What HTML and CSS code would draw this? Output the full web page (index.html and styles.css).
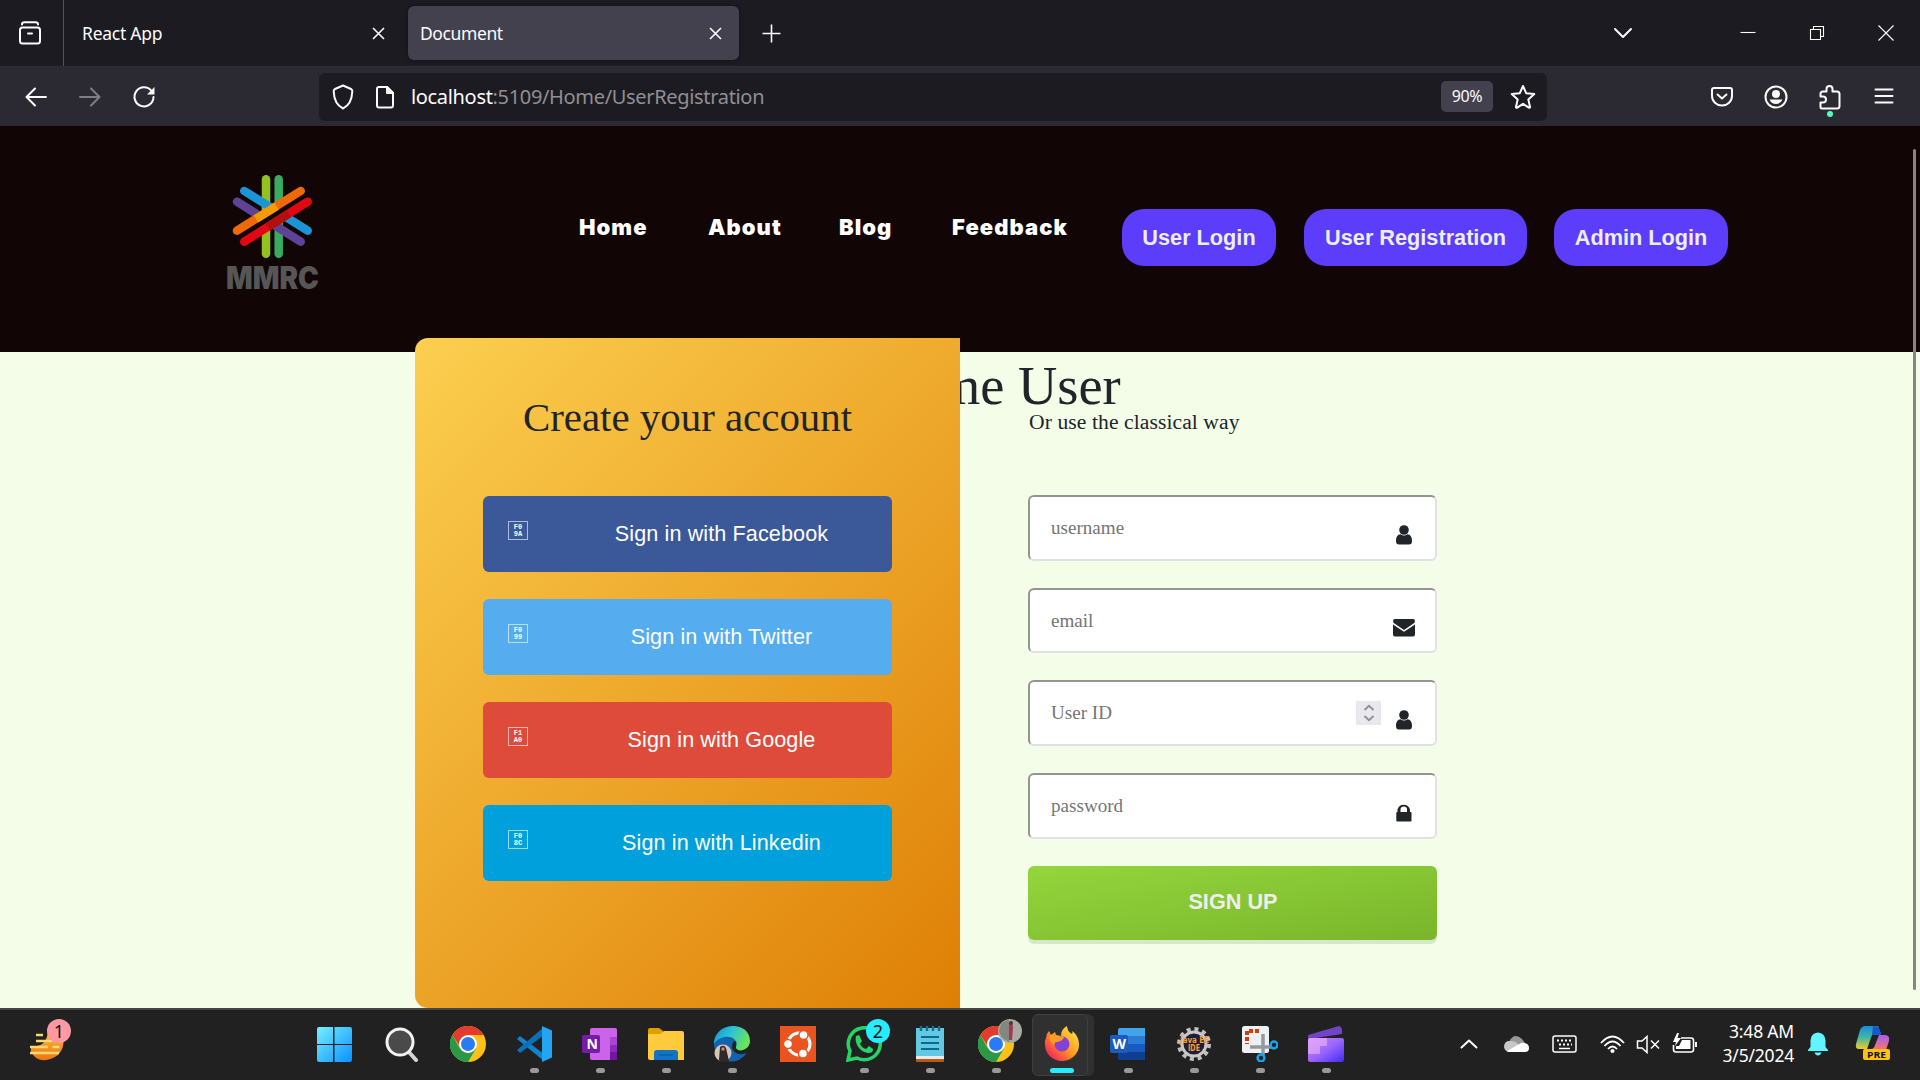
FILE: index.html
```html
<!DOCTYPE html>
<html lang="en">
<head>
<meta charset="utf-8">
<title>Document</title>
<link rel="stylesheet" href="styles.css">
</head>
<body>
<div class="screen">
  <div class="tabbar">
    <div class="pinned"><svg width="24" height="24" viewBox="0 0 24 24" class="ln"><path d="M4 3.500C4 2 5 1.200 6.500 1.200h11C19 1.200 20 2 20 3.500M4.500 6.500h15a2.500 2.500 0 0 1 2.500 2.500v11a2.500 2.500 0 0 1-2.500 2.500h-15A2.500 2.500 0 0 1 2 20V9a2.500 2.500 0 0 1 2.500-2.500zM10 12.500h4"/></svg></div>
    <div class="tab"><span>React App</span><svg width="13" height="13" viewBox="0 0 13 13" class="thin"><path d="M1 1l11 11M12 1L1 12"/></svg></div>
    <div class="tab active"><span>Document</span><svg width="13" height="13" viewBox="0 0 13 13" class="thin"><path d="M1 1l11 11M12 1L1 12"/></svg></div>
    <svg class="plus thin" width="19" height="19" viewBox="0 0 19 19"><path d="M9.500 0.500v18M0.500 9.500h18"/></svg>
    <div class="winctl">
      <svg width="20" height="14" viewBox="0 0 20 14" class="ln"><path d="M2 3l8 8 8-8"/></svg>
      <svg width="16" height="16" viewBox="0 0 16 16" class="hair"><path d="M0.500 7.500h15"/></svg>
      <svg width="16" height="16" viewBox="0 0 16 16" class="hair"><path d="M1.500 4.500h10v10h-10zM4.500 4V1.500h10v10H12"/></svg>
      <svg width="16" height="16" viewBox="0 0 16 16" class="hair"><path d="M0.500 0.500l15 15M15.500 0.500l-15 15"/></svg>
    </div>
  </div>
  <div class="toolbar">
    <div class="navbtns">
      <svg width="22" height="20" viewBox="0 0 22 20" class="ln"><path d="M10 1.500L1.500 10l8.500 8.500M2 10h19"/></svg>
      <svg width="22" height="20" viewBox="0 0 22 20" class="ln dim"><path d="M12 1.500l8.500 8.500-8.500 8.500M20 10H1"/></svg>
      <svg width="24" height="24" viewBox="0 0 24 24" class="ln"><path d="M19.500 6A9.500 9.500 0 1 0 21.500 12"/><path d="M22.500 2v7.500h-7.500z" fill="#fbfbfe" stroke="none"/></svg>
    </div>
    <div class="urlbar">
      <svg width="22" height="26" viewBox="0 0 22 26" class="ln"><path d="M11 1.500L19 5q1.500.7 1.300 2.500C20 15 17 21.500 11 24.500 5 21.500 2 15 1.700 7.500 1.500 5.700 3 5 3 5z"/></svg>
      <svg width="20" height="24" viewBox="0 0 20 24" class="ln"><path d="M4 2h8l6 6v12.500a2 2 0 0 1-2 2H4a2 2 0 0 1-2-2V4a2 2 0 0 1 2-2z"/><path d="M12 2v6h6z" fill="#fbfbfe"/></svg>
      <span class="url"><b>localhost</b>:5109/Home/UserRegistration</span>
      <span class="zoom">90%</span>
      <svg width="26" height="26" viewBox="0 0 26 26" class="ln"><path d="M13 2l3.300 7.300 8 .8-6 5.300 1.800 7.800q-.4.900-1.300.5L13 19.800l-5.800 3.900q-1.200.3-1.300-.5l1.800-7.800-6-5.300 8-.8z"/></svg>
    </div>
    <div class="tools">
      <svg width="24" height="24" viewBox="0 0 24 24" class="ln"><path d="M4 3h16a2 2 0 0 1 2 2v6a10 9.500 0 0 1-20 0V5a2 2 0 0 1 2-2zM7.500 9.500L12 13.500l4.500-4"/></svg>
      <svg width="24" height="24" viewBox="0 0 24 24" class="ln"><circle cx="12" cy="12" r="10.500"/><g fill="#fbfbfe" stroke="none"><circle cx="12" cy="9" r="4"/><path d="M5.500 14.500h13q-2 4.500-6.500 4.500t-6.500-4.500z"/></g></svg>
      <div class="ext"><svg width="24" height="26" viewBox="0 0 24 26" class="ln"><path d="M4 24.500h15a2.500 2.500 0 0 0 2.500-2.500V10A2.500 2.500 0 0 0 19 7.500h-4.500V5a3 3 0 0 0-6 0v2.500H5A2.500 2.500 0 0 0 2.500 10v2.500H5a3 3 0 0 1 0 6H2.500V23q0 1.500 1.500 1.500z"/></svg><i class="dot"></i></div>
      <svg width="20" height="18" viewBox="0 0 20 18" class="ln"><path d="M1.500 2.500h17M1.500 9h17M1.500 15.500h17"/></svg>
    </div>
  </div>

  <div class="page">
    <header class="site">
      <svg class="logo" width="98" height="120" viewBox="-2 0 98 120">
        <g stroke-width="8.500" stroke-linecap="round" fill="none">
          <path stroke="#95c11f" d="M40 4.200v74.500"/><path stroke="#3aaa61" d="M52.700 4.200v74.500"/>
          <path stroke="#5d4296" d="M11 26.700l63.700 40"/><path stroke="#1b95d8" d="M18.300 16l63.400 39.700"/>
          <path stroke="#120505" stroke-width="6" stroke-linecap="butt" d="M14.700 61.200l63.500-39.800"/>
          <path stroke="#ee6a08" d="M11 55.700l63.700-39.700"/><path stroke="#e30613" d="M18.300 66.700l63.400-40"/>
          <path stroke="#f59a00" stroke-linecap="butt" d="M30 43.900l20.500-12.800"/><path stroke="#b1100c" stroke-linecap="butt" d="M42 51.800l20.500-13"/>
        </g>
        <text x="0" y="113.500" textLength="93" lengthAdjust="spacingAndGlyphs">MMRC</text>
      </svg>
      <nav><a class="n1">Home</a><a class="n2">About</a><a class="n3">Blog</a><a class="n4">Feedback</a></nav>
      <div class="login"><button class="b1">User Login</button><button class="b2">User Registration</button><button class="b3">Admin Login</button></div>
    </header>
    <main>
      <h1>Welcome User</h1>
      <div class="card">
        <section class="social">
          <h2>Create your account</h2>
          <a class="fb"><i>F0<br>9A</i><span>Sign in with Facebook</span></a>
          <a class="tw"><i>F0<br>99</i><span>Sign in with Twitter</span></a>
          <a class="gg"><i>F1<br>A0</i><span>Sign in with Google</span></a>
          <a class="li"><i>F0<br>8C</i><span>Sign in with Linkedin</span></a>
        </section>
        <section class="classic">
          <p>Or use the classical way</p>
          <div class="field"><span>username</span><svg width="24" height="20" viewBox="0 0 24 20"><circle cx="12" cy="5" r="4.800"/><path d="M4 16c0-4 1.500-6.500 4.500-6.700q3.500 2.500 7 0C18.500 9.500 20 12 20 16q0 3.500-3 3.500H7q-3 0-3-3.500z"/></svg></div>
          <div class="field"><span>email</span><svg width="24" height="20" viewBox="0 0 24 20"><path d="M1 3q0-2 2-2h18q2 0 2 2 0 1.500-1.500 2.500L12 12 2.500 5.500Q1 4.500 1 3zM1 6.500l11 7.200 11-7.200V16.500q0 2-2 2H3q-2 0-2-2z"/></svg></div>
          <div class="field"><span>User ID</span><b class="spin"><svg width="12" height="18" viewBox="0 0 12 18"><path d="M1.500 6L6 1.800 10.500 6M1.500 12L6 16.200 10.500 12"/></svg></b><svg width="24" height="20" viewBox="0 0 24 20"><circle cx="12" cy="5" r="4.800"/><path d="M4 16c0-4 1.500-6.500 4.500-6.700q3.500 2.500 7 0C18.500 9.500 20 12 20 16q0 3.500-3 3.500H7q-3 0-3-3.500z"/></svg></div>
          <div class="field"><span>password</span><svg width="24" height="20" viewBox="0 0 24 20"><path d="M5.500 9V6.500a6.500 6.500 0 0 1 12.500 0V9h.5q1 0 1 1v7.500q0 1-1 1H5.300q-1 0-1-1V10q0-1 1-1zM8.500 9H15V6.500q0-3-3.200-3t-3.300 3z"/></svg></div>
          <button class="signup">SIGN UP</button>
        </section>
      </div>
    </main>
    <i class="scroll"></i>
  </div>

  <footer class="taskbar">
    <div class="widget"><svg width="48" height="48" viewBox="0 0 48 48"><defs><linearGradient id="sun" x2="0" y2="1"><stop stop-color="#f8c040"/><stop offset="1" stop-color="#f0740f"/></linearGradient></defs><path d="M3 28Q18 30 20 14 30 8 35 20q2 10-5 17-8 6-16 5Q8 42 3 34z" fill="url(#sun)"/><g stroke="#f8d774" stroke-width="2.700"><path d="M8 17h7M8 23h16M2 29h18M24.500 29h7M2 35h29"/></g></svg><em>1</em></div>
    <div class="apps">
      <div class="start"><svg viewBox="0 0 36 36"><defs><linearGradient id="win" x2="1" y2="1"><stop stop-color="#74f0ff"/><stop offset="1" stop-color="#0a90ff"/></linearGradient></defs><path fill="url(#win)" d="M1 3q0-2 2-2h14v17H1zM18.500 1H34q2 0 2 2v15H18.500zM1 19h16v17H3q-2 0-2-2zM18.500 19H36v15q0 2-2 2H18.500z"/></svg></div>
      <div><svg viewBox="0 0 36 36"><path d="M24 25l8 9" stroke="#d2d4d8" stroke-width="4" stroke-linecap="round"/><circle cx="16" cy="16" r="13" fill="#4a4a4a" stroke="#f2f2f3" stroke-width="3"/></svg></div>
      <div><svg viewBox="0 0 36 36"><circle cx="18" cy="18" r="18" fill="#fbc116"/><path d="M2.400 9A18 18 0 0 1 33.600 9H18L11 22z" fill="#e33b2e"/><path d="M2.400 9A18 18 0 0 0 18 36l8-13.500H10z" fill="#2a9a48"/><circle cx="18" cy="18" r="9" fill="#fff"/><circle cx="18" cy="18" r="7" fill="#2a7af3"/></svg></div>
      <div class="on"><svg viewBox="0 0 36 36"><path d="M1 13l3-3L28 28v7z" fill="#1183cc"/><path d="M1 24l3 3L28 9V1z" fill="#0a71b8"/><path d="M26 0l10 4.500v27L26 36z" fill="#25a4f0"/></svg></div>
      <div class="on"><svg viewBox="0 0 36 36"><rect x="8" y="2" width="27" height="32" rx="2" fill="#cb64e8"/><path d="M28 11h7v8h-7z" fill="#a945d0"/><path d="M28 19h7v7h-7z" fill="#8e2abb"/><path d="M28 26h7v8h-7z" fill="#7417a0"/><rect y="9" width="18" height="18" rx="2" fill="#7719aa"/><text x="4.500" y="23" class="ms">N</text></svg></div>
      <div class="on"><svg viewBox="0 0 36 36"><path d="M0 4q0-2 2-2h9l4 3v6H0z" fill="#dfa000"/><path d="M0 8h12l4-3h18q2 0 2 2v27H2q-2 0-2-2z" fill="#ffcb3d"/><path d="M6 34v-7q0-3 3-3h18q3 0 3 3v7z" fill="#1374c6"/><path d="M11 29h14" stroke="#07549c"/></svg></div>
      <div class="on"><svg viewBox="0 0 36 36"><defs><linearGradient id="edg" x2="1" y2=".4"><stop stop-color="#138fd8"/><stop offset=".5" stop-color="#2cc3d5"/><stop offset="1" stop-color="#6be35b"/></linearGradient></defs><circle cx="17.500" cy="18" r="17.500" fill="#1262b0"/><path d="M20 15q-5 7 2 12 6 3 12-1l3-8z" fill="#1f2422"/><path d="M0 18C0-5 36-6 36 15c0 9-12 12-14 7 0-4 2-5-2-9S5 10 0 18z" fill="url(#edg)"/><circle cx="9" cy="27" r="8.500" fill="#d5c5b5"/><path d="M6 21q4-3 6 1l3 13q-6 3-10-1z" fill="#302829"/><circle cx="9" cy="23" r="1.700" fill="#c48a70"/></svg></div>
      <div><svg viewBox="0 0 36 36"><path fill="#e95420" d="M0 0h36v36H0z"/><circle cx="19" cy="18" r="11" fill="none" stroke="#fff" stroke-width="3"/><g fill="#fff" stroke="#e95420" stroke-width="1.500"><circle cx="8" cy="18" r="4.500"/><circle cx="23.500" cy="9" r="4.500"/><circle cx="23" cy="27.500" r="4.500"/></g></svg></div>
      <div class="on"><svg viewBox="0 0 36 36"><path d="M2 34l2-9A16 16 0 1 1 11 32z" fill="none" stroke="#25d366" stroke-width="3.500"/><path d="M10 10l3-1 3 6-2 3q2 4 6 5l3-3 4 3q0 4-4 4C15 27 8 18 10 10z" fill="#25d366"/></svg><em>2</em></div>
      <div class="on"><svg viewBox="0 0 36 36"><rect x="4" y="26" width="28" height="10" rx="1" fill="#b95a13"/><path d="M4 29h28v4H4z" fill="#e9e9ea"/><path d="M4 2h28v28H4z" fill="#62c8e3"/><path d="M9 0v5M15 0v5M21 0v5M27 0v5" stroke="#13708e" stroke-width="2.500"/><path d="M9 11h18M9 17h18M9 23h18" stroke="#0c6a8b" stroke-width="2"/></svg></div>
      <div class="on"><svg viewBox="0 0 36 36"><circle cx="18" cy="18" r="18" fill="#fbc116"/><path d="M2.400 9A18 18 0 0 1 33.600 9H18L11 22z" fill="#e33b2e"/><path d="M2.400 9A18 18 0 0 0 18 36l8-13.500H10z" fill="#2a9a48"/><circle cx="18" cy="18" r="9" fill="#fff"/><circle cx="18" cy="18" r="7" fill="#2a7af3"/></svg><svg class="face" viewBox="0 0 24 24"><circle cx="12" cy="12" r="12" fill="#a8aaa3"/><path d="M3 5q4-4 8-4v22Q2 19 1 12z" fill="#81897e"/><path d="M11 4q4-1 4 5l-1 12h-3z" fill="#a83554"/><circle cx="13" cy="4" r="2" fill="#55382f"/></svg></div>
      <div class="current"><svg viewBox="0 0 36 36"><defs><linearGradient id="ff" x1="1" x2="0" y2="1"><stop stop-color="#fff04a"/><stop offset=".5" stop-color="#ff9820"/><stop offset=".8" stop-color="#f83950"/><stop offset="1" stop-color="#d02090"/></linearGradient></defs><path d="M2 12q0-4 3-7l2 4 4-3 1 3 5 1q0-7 6-10 0 5 5 8 1-2 0-3c6 4 7 10 7 14a17 16 0 0 1-34 0q-1-4 1-7z" fill="url(#ff)"/><circle cx="18" cy="18" r="7.500" fill="#8342d5"/><path d="M5 10q6-4 9 1h6q-1 4-7 5-3 0-3 3-5-4-5-9z" fill="#ff9b22"/></svg></div>
      <div class="on"><svg viewBox="0 0 36 36"><path d="M8 4q0-2 2-2h25v9H8z" fill="#41a5ee"/><path d="M8 10h27v8H8z" fill="#2b7cd3"/><path d="M8 18h27v8H8z" fill="#185abd"/><path d="M8 26h27v8H10q-2 0-2-2z" fill="#103f91"/><rect y="9" width="18" height="18" rx="2" fill="#1b5abe"/><text x="2.500" y="22.500" class="ms">W</text></svg></div>
      <div class="on"><svg viewBox="0 0 36 36"><circle cx="18" cy="18" r="15" fill="none" stroke="#bfc0c2" stroke-width="4" stroke-dasharray="4 3.850"/><circle cx="18" cy="18" r="12" fill="#202035" stroke="#c8c8ca" stroke-width="3"/><text x="4" y="17" class="java" textLength="29" lengthAdjust="spacingAndGlyphs">Java EE</text><text x="12" y="24.500" class="java" textLength="12" lengthAdjust="spacingAndGlyphs">IDE</text></svg></div>
      <div class="on"><svg viewBox="0 0 36 36"><rect width="27" height="27" rx="2.500" fill="#edf1f4"/><path d="M17 5H5V18" fill="none" stroke="#d63b0d" stroke-width="4" stroke-dasharray="4 2"/><path d="M8 21h22M21 8v22" stroke="#92999f" stroke-width="3.500"/><g fill="none" stroke="#19a3e8" stroke-width="2.500"><circle cx="32" cy="19" r="3.400"/><circle cx="19" cy="32" r="3.400"/></g></svg></div>
      <div class="on"><svg viewBox="0 0 36 36"><defs><linearGradient id="cc" x2="1" y2="1"><stop stop-color="#c987fa"/><stop offset=".5" stop-color="#9b66ff"/><stop offset="1" stop-color="#402cf0"/></linearGradient></defs><path d="M0 12V9L31 0q2 0 3 4v4L8 12z" fill="#7044c9"/><rect y="12" width="36" height="24" rx="2" fill="url(#cc)"/><path d="M0 14q0-2 2-2h17v8h-7v8H0z" fill="#efb2fa" opacity=".6"/></svg></div>
    </div>
    <div class="tray">
      <svg width="18" height="12" viewBox="0 0 18 12" class="ln"><path d="M1.500 9.500L9 2.500l7.500 7"/></svg>
      <svg width="25" height="18" viewBox="0 0 25 18"><path d="M5 7q5-10 13-3l3 4L10 12z" fill="#989898"/><path d="M5 6q8-1 11 6l-12 5Q0 15 0 11q1-5 5-5z" fill="#c7c7c7"/><path d="M3 16L17 8q8-1 8 5 0 4-4 4H5z" fill="#fff"/></svg>
      <svg width="25" height="18" viewBox="0 0 25 18" fill="none" stroke="#fff" stroke-width="1.500"><rect x="1" y="1" width="23" height="16" rx="2"/><path d="M5 5.500h16M7 9.500h13" stroke-width="2" stroke-dasharray="2 2"/><path d="M7 13.500h11"/></svg>
      <svg width="25" height="19" viewBox="0 0 25 19" fill="none" stroke="#fff" stroke-width="1.800"><path d="M1 8q11.500-13 23 0M4.500 11q8-9 16 0M8 14q4.500-5 9 0"/><circle cx="12.500" cy="16" r="1.600" fill="#fff" stroke-width="1"/></svg>
      <svg width="25" height="19" viewBox="0 0 25 19" fill="none" stroke="#fff" stroke-width="1.500"><path d="M1.500 6H6l5-4.500v16L6 13H1.500zM15 5.500l8 8M23 5.500l-8 8"/></svg>
      <svg width="26" height="22" viewBox="0 0 26 22"><path d="M9 5h10q2.500 0 2.500 2.500v9Q21.500 19 19 19H4q-2.500 0-2.500-2.500V12" fill="none" stroke="#fff" stroke-width="1.600"/><path d="M10 7h8.500v9H4v-3h3zM23 9h2v5h-2zM5 0L1 9h3L3 13l6-8H5.500L7 0z" fill="#fff"/></svg>
      <div class="clock">3:48 AM<br>3/5/2024</div>
      <svg width="20" height="24" viewBox="0 0 20 24" fill="#62f5ff"><path d="M10 .5q7 .5 7.500 8V15l2.500 3v1H0v-1l2.500-3V8.500Q3 1 10 .5zM6.500 20.500h7q-1 3-3.500 3t-3.500-3z"/></svg>
      <svg class="copilot" width="36" height="36" viewBox="0 0 36 36"><defs><linearGradient id="c1" x2="0" y2="1"><stop stop-color="#168de0"/><stop offset=".5" stop-color="#45b6a0"/><stop offset="1" stop-color="#f6cb25"/></linearGradient><linearGradient id="c2" x2="0" y2="1"><stop stop-color="#a65df0"/><stop offset="1" stop-color="#f7776a"/></linearGradient></defs><path d="M9 0h14l3 8-9 1-5 14H4q-4 0-3-5L5 4q1-3 4-4z" fill="url(#c1)"/><path d="M18 0q6 0 7 5l1 4h-9z" fill="#1857cf"/><path d="M24 9h6q5 0 4 6l-3 9H8l8-1q3 0 4-4z" fill="url(#c2)"/><rect x="8" y="23" width="27" height="11" rx="2" fill="#ffc30b"/><text x="12" y="32" textLength="19" lengthAdjust="spacingAndGlyphs" class="pre">PRE</text></svg>
    </div>
  </footer>
</div>
</body>
</html>
```
FILE: styles.css
```css
* { box-sizing: border-box; }
body { margin: 0; overflow: hidden; }
svg { display: block; flex: none; }
.screen { width: 1920px; height: 1080px; display: flex; flex-direction: column; font-family: "Noto Sans", sans-serif; color: #fbfbfe; }
.ln { fill: none; stroke: #fbfbfe; stroke-width: 2; stroke-linecap: round; stroke-linejoin: round; }
.thin { fill: none; stroke: #fbfbfe; stroke-width: 1.6; }
.hair { fill: none; stroke: #fff; stroke-width: 1.1; }
.dim { opacity: .4; }

.tabbar { height: 66px; flex: none; background: #1c1b22; display: flex; align-items: center; }
.pinned { width: 64px; height: 66px; border-right: 1px solid #55545c; padding: 21px 0 0 18px; }
.tab { width: 331px; height: 54px; display: flex; justify-content: space-between; align-items: center; padding: 0 17px 0 12px; border-radius: 6px; font-size: 17.5px; letter-spacing: -.25px; margin-left: 7px; }
.tab:not(.active) { width: 332px; margin-left: 6px; }
.tab.active { background: #42414d; box-shadow: 0 0 4px #0006; margin-left: 6px; letter-spacing: -.4px; }
.plus { margin-left: 23px; }
.winctl { margin-left: auto; padding-right: 26px; display: flex; align-items: center; }
.winctl svg:nth-child(1) { margin-right: 107px; }
.winctl svg:nth-child(2), .winctl svg:nth-child(3) { margin-right: 53px; }

.toolbar { height: 60px; flex: none; background: #2b2a33; display: flex; align-items: center; border-top: 1px solid #2f2e37; }
.navbtns { width: 319px; display: flex; align-items: center; gap: 32px; padding-left: 25px; }
.navbtns svg:last-child { margin-left: -1px; }
.urlbar { width: 1228px; height: 48px; border-radius: 6px; background: #1c1b22; display: flex; align-items: center; padding: 0 11px 0 13px; }
.urlbar svg:nth-child(2) { margin: 0 16px 0 21px; }
.url { color: #8f8f94; font-size: 20px; letter-spacing: -.33px; flex: 1; white-space: nowrap; }
.url b { color: #fbfbfe; font-weight: 400; }
.zoom { width: 52px; height: 31px; border-radius: 5px; background: #42414d; font-size: 16px; letter-spacing: -.4px; line-height: 31px; text-align: center; margin-right: 17px; }
.tools { flex: 1; display: flex; align-items: center; padding: 0 26px 0 0; justify-content: flex-end; gap: 30px; }
.tools > :last-child { margin-left: 2px; margin-bottom: 2px; }
.ext { position: relative; }
.dot { position: absolute; left: 9px; bottom: -7px; width: 6px; height: 6px; border-radius: 3px; background: #54ffbd; }

.page { height: 882px; flex: none; background: #f3fde8; display: flex; flex-direction: column; position: relative; color: #212529; }
.site { height: 226px; flex: none; background: #120505; display: flex; align-items: flex-start; }
.logo { margin: 49px 0 0 224px; }
.logo text { font: 900 31px Inter, sans-serif; fill: #565656; }
.site nav { display: flex; color: #fff; font: 900 22px/30px Inter, sans-serif; letter-spacing: 1.05px; padding: 86px 0 0 257px; width: 800px; }
.site nav a { flex: none; white-space: nowrap; }
.n1 { width: 129px; } .n2 { width: 131px; } .n3 { width: 113px; }
.login { display: flex; padding-top: 83px; }
.login button { height: 57px; border: 0; border-radius: 22px; padding: 0; background: #5b3dfb; color: #eee; font: bold 21.7px "Liberation Sans", sans-serif; }
.b1 { width: 154px; } .b2 { width: 223px; margin: 0 27px 0 28px; } .b3 { width: 174px; }

main { height: 656px; display: grid; font-family: "Liberation Serif", serif; }
h1, .card { grid-area: 1 / 1; }
h1 { margin: 0; text-align: center; font-weight: 400; font-size: 54.4px; line-height: 62px; padding: 3px 0 0 1px; }
.card { margin: -14px auto 0; width: 1090px; height: 670px; display: flex; z-index: 1; }
.social { width: 545px; padding: 0 68px; border-radius: 13px 0 0 13px; background: linear-gradient(135deg, #fccf50, #de7f05); display: flex; flex-direction: column; gap: 27px; }
h2 { margin: 54px 0 26px; text-align: center; font-size: 40.9px; line-height: 51px; font-weight: 400; white-space: nowrap; }
.social a { height: 76px; flex: none; border-radius: 6px; color: #fff; font: 21.6px "Liberation Sans", sans-serif; display: flex; padding: 25px 0 0 25px; }
.social a i { width: 20px; height: 19px; border: 1px solid #fff9; font: bold 7px/7px "Liberation Mono", monospace; text-align: center; padding-top: 2px; }
.social a span { flex: 1; text-align: center; padding-left: 23px; line-height: 26px; letter-spacing: .1px; }
.fb { background: #3b5998; } .tw { background: #55acee; } .gg { background: #df4b3b; } .li { background: #00a0dc; }
.classic { width: 545px; padding: 0 68px; }
.classic p { margin: 71px 0 60px 1px; font-size: 21.6px; letter-spacing: .08px; line-height: 26px; }
.field { width: 409px; height: 65.5px; border: 2px solid; border-color: #929591 #e1e1e3 #e1e1e3 #929591; border-radius: 6px; background: #fff; display: flex; align-items: flex-start; padding: 0 19px 0 21px; margin-bottom: 27.2px; color: #757575; font-size: 19.1px; }
.field span { flex: 1; line-height: 62.6px; }
.field svg { fill: #212529; margin-top: 28px; }
.spin { width: 25px; height: 24px; margin: 18.5px 11px 0 0; background: #e9e9ed; display: flex; justify-content: center; padding-top: 3px; }
.field .spin svg { margin: 0; fill: none; stroke: #8f8f9d; stroke-width: 2; }
.signup { display: block; width: 409px; height: 74px; border: 0; border-radius: 6px; padding: 0 0 1px 1px; background: linear-gradient(170deg, #94d63d, #79b52b); box-shadow: 0 4px 0 #d8e6ca; color: #eee; font: bold 21.7px "Liberation Sans", sans-serif; }
.scroll { position: absolute; right: 4px; top: 23px; width: 3px; height: 841px; border-radius: 2px; background: #8a8585; }

.taskbar { height: 72px; flex: none; background: #212121; border-top: 2px solid #454545; display: flex; }
.taskbar em { position: absolute; width: 24px; height: 24px; border-radius: 12px; color: #111; font: 18px/24px "Noto Sans", sans-serif; text-align: center; }
.widget { width: 301px; padding: 8px 0 0 28px; position: relative; }
.widget em { left: 47px; top: 9px; background: #ff99a4; }
.apps { display: flex; }
.apps .start { margin-right: 2px; }
.apps div { width: 66px; padding: 16px 15px 0; position: relative; display: flex; flex-direction: column; align-items: center; gap: 6px; }
.apps svg { width: 36px; height: 36px; }
.apps em { left: 35px; top: 9px; background: #26ecff; }
.apps .on::after { content: ""; width: 9px; height: 5px; border-radius: 3px; background: #999; }
.apps .current::before { content: ""; position: absolute; left: 3px; top: 4px; width: 54px; height: 60px; border: 1px solid #404040; border-radius: 6px; background: #303030; box-shadow: 6px 0 0 #303030; }
.apps .current svg { z-index: 1; }
.apps .current::after { content: ""; z-index: 1; width: 24px; height: 5px; border-radius: 3px; background: #26ecff; }
.apps .face { position: absolute; left: 35px; top: 9px; width: 24px; height: 24px; }
.ms { font: bold 14px "Open Sans", sans-serif; fill: #fff; }
.java { font: bold 8px "DejaVu Sans", sans-serif; fill: #ff9b37; }
.tray { flex: 1; display: flex; align-items: center; padding-left: 101px; height: 68px; }
.tray svg:nth-child(2) { margin: 0 23px 0 26px; }
.tray svg:nth-child(4) { margin: 0 11px 0 23px; }
.tray svg:nth-child(6) { margin-left: 11px; }
.clock { flex: none; width: 97px; text-align: right; font-size: 17.5px; line-height: 24px; letter-spacing: -.2px; color: #fff; margin-right: 13px; padding: 0 1px 2px 0; }
.copilot { margin-left: 27px; }
.pre { font: bold 9px "Open Sans", sans-serif; fill: #111; }
```
